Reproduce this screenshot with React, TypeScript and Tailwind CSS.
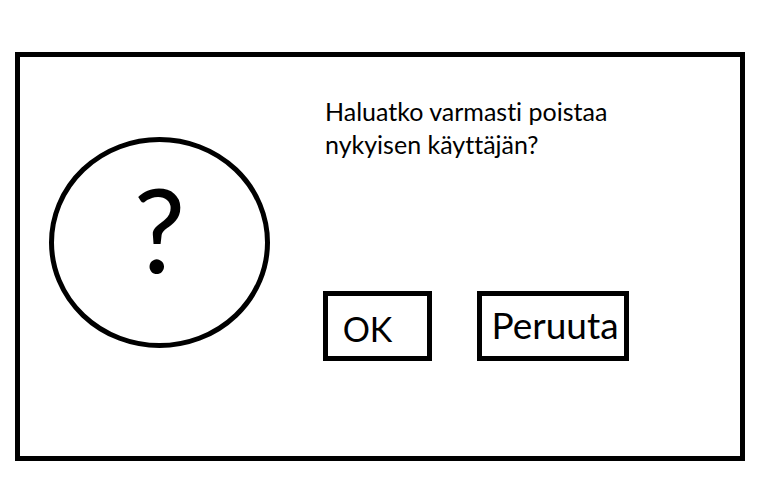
export default function App() {
  return (
    <main className="min-h-screen bg-white pl-[15px] pr-[33px] pt-[52px] font-['Lato','Open_Sans',sans-serif] text-black [font-variant-ligatures:none]">
      <section
        role="alertdialog"
        aria-labelledby="question"
        className="flex items-start border-[5px] border-black pb-[95px] pl-[29px] pr-8 pt-[38px]"
      >
        <div className="mt-[42px] grid shrink-0 justify-items-center">
          <svg
            viewBox="0 0 221 211"
            className="col-start-1 row-start-1 h-[211px] w-[221px]"
            fill="none"
            stroke="#000"
            aria-hidden="true"
          >
            <ellipse cx="110.5" cy="105.5" rx="108" ry="103" strokeWidth="5" />
          </svg>
          <span className="col-start-1 row-start-1 pt-[34px] text-[116px] leading-[116px]">?</span>
        </div>
        <div className="ml-[53px] min-w-0 flex-1">
          <p id="question" className="max-w-[320px] pl-0.5 text-[25px] leading-[33px]">
            Haluatko varmasti poistaa nykyisen käyttäjän?
          </p>
          <div className="mt-[130px] flex gap-[45px]">
            <button type="button" className="h-[70px] w-[109px] border-[5px] border-black pr-5 pt-1.5 text-[34px] leading-none">
              OK
            </button>
            <button type="button" className="h-[70px] w-[152px] border-[5px] border-black pb-1 pl-1 text-[37px] leading-none">
              Peruuta
            </button>
          </div>
        </div>
      </section>
    </main>
  );
}
